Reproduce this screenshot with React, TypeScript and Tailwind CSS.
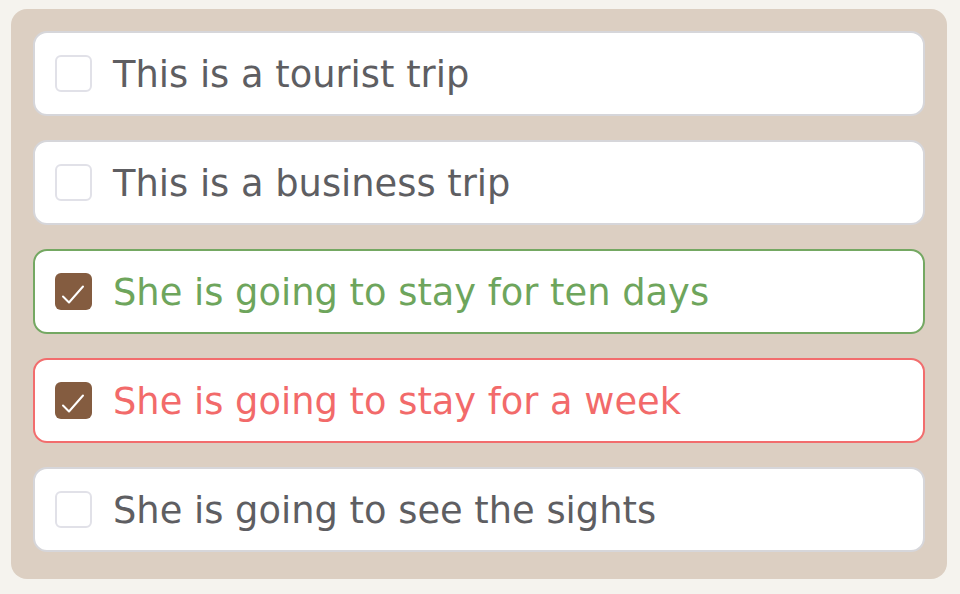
import React from 'react';

type Option = {
  label: string;
  checked: boolean;
  state: 'none' | 'correct' | 'wrong';
};

const options: Option[] = [
  { label: 'This is a tourist trip', checked: false, state: 'none' },
  { label: 'This is a business trip', checked: false, state: 'none' },
  { label: 'She is going to stay for ten days', checked: true, state: 'correct' },
  { label: 'She is going to stay for a week', checked: true, state: 'wrong' },
  { label: 'She is going to see the sights', checked: false, state: 'none' },
];

function Checkbox({ checked }: { checked: boolean }) {
  if (checked) {
    return (
      <div className="h-[37px] w-[37px] shrink-0 rounded-[6px] bg-[#845c40]">
        <svg width="37" height="37" viewBox="0 0 37 37" fill="none">
          <path d="M8 23.5l6 6L28 13.5" stroke="white" strokeWidth="2" strokeLinecap="round" strokeLinejoin="round" />
        </svg>
      </div>
    );
  }
  return <div className="h-[37px] w-[37px] shrink-0 rounded-[6px] border-2 border-[#e1e1e8] bg-white" />;
}

export default function App() {
  return (
    <div className="min-h-[594px] w-[960px] bg-[#f5f3ee] pl-[11px] pt-[9px]" style={{ fontFamily: '"DejaVu Sans", Verdana, sans-serif' }}>
      <div className="flex w-[936px] flex-col gap-[24px] rounded-[16px] bg-[#dccfc2] px-[22px] pb-[27px] pt-[22px]">
        {options.map((o) => {
          const border =
            o.state === 'correct' ? 'border-[#74a862]' : o.state === 'wrong' ? 'border-[#f26d6d]' : 'border-[#d6d6da]';
          const text =
            o.state === 'correct' ? 'text-[#6ea55c]' : o.state === 'wrong' ? 'text-[#f26a6a]' : 'text-[#5e5e62]';
          return (
            <div
              key={o.label}
              className={`flex h-[85px] items-center gap-[21px] rounded-[14px] border-2 bg-white px-[20px] ${border}`}
            >
              <Checkbox checked={o.checked} />
              <span className={`pt-[3px] text-[36.8px] leading-none ${text}`}>{o.label}</span>
            </div>
          );
        })}
      </div>
    </div>
  );
}
